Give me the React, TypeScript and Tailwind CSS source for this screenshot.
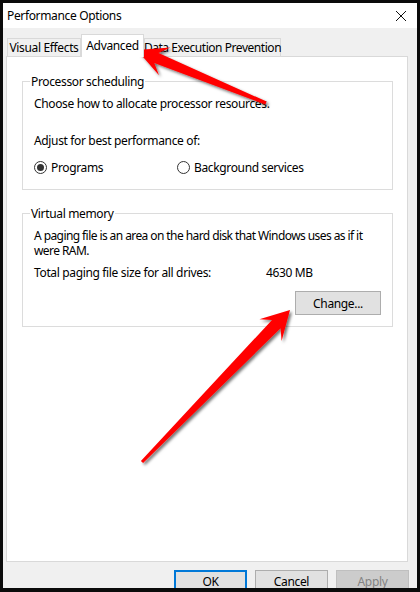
import React from 'react'

type Pt = [number, number]

// builds a tapered arrow polygon from tail to tip
const arrowPoints = (tail: Pt, tip: Pt, hl: number, hw: number, sw: number, tw: number) => {
    const dx = tip[0] - tail[0]
    const dy = tip[1] - tail[1]
    const len = Math.hypot(dx, dy)
    const ux = dx / len
    const uy = dy / len
    const nx = -uy
    const ny = ux
    const bx = tip[0] - ux * hl
    const by = tip[1] - uy * hl
    const jx = tip[0] - ux * hl * 0.7
    const jy = tip[1] - uy * hl * 0.7
    const pts: Pt[] = [
        tip,
        [bx + nx * hw, by + ny * hw],
        [jx + nx * sw / 2, jy + ny * sw / 2],
        [tail[0] + nx * tw / 2, tail[1] + ny * tw / 2],
        [tail[0] - nx * tw / 2, tail[1] - ny * tw / 2],
        [jx - nx * sw / 2, jy - ny * sw / 2],
        [bx - nx * hw, by - ny * hw],
    ]
    return pts.map((p) => p.map((v) => v.toFixed(1)).join(',')).join(' ')
}

const Radio = ({checked, label}: { checked?: boolean, label: string }) => (
    <div className="flex items-center gap-[4px]">
        <span className="w-[13px] h-[13px] rounded-full border border-[#333333] bg-white flex items-center justify-center">
            {checked && <span className="w-[7px] h-[7px] rounded-full bg-[#333333]"/>}
        </span>
        <span>{label}</span>
    </div>
)

const GroupBox = ({title, className, children}: { title: string, className?: string, children: React.ReactNode }) => (
    <div className={`relative border border-[#dcdcdc] ml-[15px] mr-[14px] ${className ?? ''}`}>
        <span className="absolute -top-[8px] left-[7px] bg-white px-px">{title}</span>
        {children}
    </div>
)

const App = () => {
    return (
        <div className="relative w-[420px] h-[592px] bg-[#0b0b0b] pt-[3px] pl-[3px] overflow-hidden whitespace-nowrap font-['Noto_Sans','Liberation_Sans',sans-serif] text-[12px] leading-[15px] tracking-[-0.35px] text-black">
            <div className="w-[414px] h-[585px] bg-[#f0f0f0] flex flex-col overflow-hidden">
                <div className="h-[25px] shrink-0 bg-white flex items-center justify-between pl-[4px] pr-[11px]">
                    <span>Performance Options</span>
                    <svg width="10" height="10" viewBox="0 0 10 10">
                        <path d="M0 0L10 10M10 0L0 10" stroke="#111" strokeWidth="1"/>
                    </svg>
                </div>

                <div className="pl-[3px] pr-[9px] pt-[6px]">
                    <div className="flex items-end h-[22px] pl-px">
                        <div className="w-[74px] h-[18px] border border-b-0 border-[#d9d9d9] bg-[#f0f0f0] flex items-center justify-center">
                            Visual Effects
                        </div>
                        <div className="relative z-10 -mb-px w-[63px] h-[23px] border border-b-0 border-[#d9d9d9] bg-white flex items-center justify-center pb-px">
                            Advanced
                        </div>
                        <div className="w-[137px] h-[18px] border border-b-0 border-[#d9d9d9] bg-[#f0f0f0] flex items-center justify-center tracking-[-0.45px]">
                            Data Execution Prevention
                        </div>
                    </div>

                    <div className="h-[506px] border border-[#d9d9d9] bg-white pt-[24px]">
                        <GroupBox title="Processor scheduling">
                            <div className="pt-[14px] pb-[14px] pl-[11px]">
                                <div>Choose how to allocate processor resources.</div>
                                <div className="mt-[22px]">Adjust for best performance of:</div>
                                <div className="mt-[12px] flex">
                                    <div className="w-[143px]">
                                        <Radio checked label="Programs"/>
                                    </div>
                                    <Radio label="Background services"/>
                                </div>
                            </div>
                        </GroupBox>

                        <GroupBox title="Virtual memory" className="mt-[23px]">
                            <div className="pt-[14px] pb-[11px] pl-[11px] pr-[11px]">
                                <div className="tracking-[-0.58px]">
                                    A paging file is an area on the hard disk that Windows uses as if it<br/>were RAM.
                                </div>
                                <div className="mt-[7px] flex">
                                    <span className="w-[232px]">Total paging file size for all drives:</span>
                                    <span>4630 MB</span>
                                </div>
                                <div className="mt-[11px] flex justify-end">
                                    <div className="w-[86px] h-[24px] bg-[#e1e1e1] border border-[#adadad] flex items-center justify-center">
                                        Change...
                                    </div>
                                </div>
                            </div>
                        </GroupBox>
                    </div>
                </div>

                <div className="mt-[8px] flex justify-end gap-[8px] pr-[8px]">
                    <div className="w-[73px] h-[23px] bg-[#e1e1e1] border-2 border-[#0078d7] flex items-center justify-center">OK</div>
                    <div className="w-[73px] h-[23px] bg-[#e1e1e1] border border-[#adadad] flex items-center justify-center">Cancel</div>
                    <div className="w-[73px] h-[23px] bg-[#cccccc] border border-[#bfbfbf] text-[#838383] flex items-center justify-center">Apply</div>
                </div>
            </div>

            <svg className="absolute inset-0 pointer-events-none" width="420" height="592" viewBox="0 0 420 592">
                <defs>
                    <filter id="shadow" x="-20%" y="-20%" width="140%" height="140%">
                        <feDropShadow dx="2" dy="2" stdDeviation="1.6" floodColor="#000" floodOpacity="0.55"/>
                    </filter>
                </defs>
                <polygon points={arrowPoints([266, 103], [137, 50], 30, 15, 11, 3)} fill="#ff0000" filter="url(#shadow)"/>
                <polygon points={arrowPoints([142, 462], [290, 310], 28, 15.5, 12, 3)} fill="#ff0000" filter="url(#shadow)"/>
            </svg>
        </div>
    )
}

export default App
